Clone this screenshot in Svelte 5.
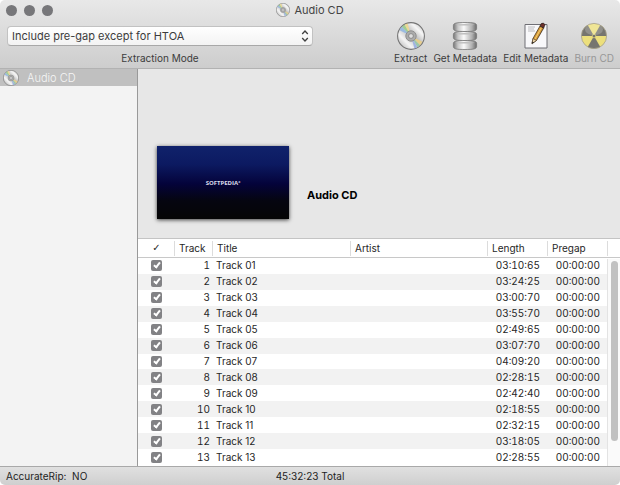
<script lang="ts">
  interface Track {
    number: number;
    length: string;
    pregap: string;
    selected: boolean;
  }

  const lengths = [
    '03:10:65', '03:24:25', '03:00:70', '03:55:70', '02:49:65', '03:07:70', '04:09:20',
    '02:28:15', '02:42:40', '02:18:55', '02:32:15', '03:18:05', '02:28:55'
  ];

  let tracks = $state<Track[]>(
    lengths.map((length, i) => ({ number: i + 1, length, pregap: '00:00:00', selected: true }))
  );

  let mode = $state('except-htoa');

  const trackTitle = (n: number) => `Track ${String(n).padStart(2, '0')}`;
</script>

{#snippet disc(id: string)}
  <svg class="disc" viewBox="0 0 28 28" aria-hidden="true">
    <defs>
      <linearGradient id="{id}-base" x1="0" y1="1" x2="1" y2="0">
        <stop offset="0" stop-color="#a0a0a0" />
        <stop offset="0.3" stop-color="#f4f4f4" />
        <stop offset="0.55" stop-color="#bcbcbc" />
        <stop offset="0.75" stop-color="#f6f6f6" />
        <stop offset="1" stop-color="#acacac" />
      </linearGradient>
    </defs>
    <circle cx="14" cy="14" r="13.4" fill="url(#{id}-base)" stroke="#747474" stroke-width="1.1" />
    <path d="M14 14 2.6 8.2A13 13 0 0 1 5 4.8Z" fill="#9bbbe0" />
    <path d="M14 14 5 4.8A13 13 0 0 1 7.6 2.8Z" fill="#9fcf94" />
    <path d="M14 14 7.6 2.8A13 13 0 0 1 10.6 1.6Z" fill="#ecd894" />
    <path d="M14 14 25.4 19.8A13 13 0 0 1 23 23.2Z" fill="#e6cd8c" />
    <path d="M14 14 23 23.2A13 13 0 0 1 20.4 25.2Z" fill="#9cc7aa" />
    <path d="M14 14 20.4 25.2A13 13 0 0 1 17.4 26.4Z" fill="#a0b3e0" />
    <circle cx="14" cy="14" r="5.2" fill="#acacac" stroke="#8a8a8a" stroke-width="0.9" />
    <circle cx="14" cy="14" r="2.4" fill="#dedede" stroke="#858585" stroke-width="0.9" />
  </svg>
{/snippet}

<div class="window">
  <header class="chrome">
    <div class="titlebar">
      <div class="lights" aria-hidden="true"><i></i><i></i><i></i></div>
      <h1 class="title">{@render disc('title')}Audio CD</h1>
    </div>

    <div class="toolbar">
      <div class="mode">
        <div class="popup">
          <select id="mode" bind:value={mode}>
            <option value="except-htoa">Include pre-gap except for HTOA</option>
            <option value="include">Include pre-gap</option>
            <option value="exclude">Exclude pre-gap</option>
          </select>
          <svg class="popup-arrows" viewBox="0 0 8 14" aria-hidden="true">
            <path d="M1.2 5 4 2 6.8 5M1.2 9 4 12 6.8 9" />
          </svg>
        </div>
        <label for="mode">Extraction Mode</label>
      </div>

      <nav class="actions">
        <button type="button" class="action">
          {@render disc('extract')}
          Extract
        </button>
        <button type="button" class="action">
          <svg viewBox="0 0 28 28" aria-hidden="true">
            <defs>
              <linearGradient id="drum">
                <stop offset="0" stop-color="#777" />
                <stop offset="0.2" stop-color="#c8c8c8" />
                <stop offset="0.45" stop-color="#fafafa" />
                <stop offset="0.8" stop-color="#b0b0b0" />
                <stop offset="1" stop-color="#6a6a6a" />
              </linearGradient>
            </defs>
            {#each [18.5, 9.5, 0.5] as y}
              <path
                d="M2.4 {y + 3}C2.4 {y + 0.4} 6 {y} 14 {y}S25.6 {y + 0.4} 25.6 {y + 3}V{y + 6}C25.6 {y + 8.6} 22 {y + 9} 14 {y + 9}S2.4 {y + 8.6} 2.4 {y + 6}Z"
                fill="url(#drum)"
                stroke="#777"
                stroke-width="0.8"
              />
              <path d="M4 {y + 2.2}Q14 {y + 4} 24 {y + 2.2}Q14 {y + 0.6} 4 {y + 2.2}Z" fill="#bdbdbd" />
            {/each}
          </svg>
          Get Metadata
        </button>
        <button type="button" class="action">
          <svg viewBox="0 0 28 28" aria-hidden="true">
            <path d="M3 2.5H25V26H3Z" fill="#f8f8fa" stroke="#6f6f74" />
            <path d="M6 5H13M6 7H12M6 9H13" stroke="#b5b5b9" stroke-width="0.9" />
            <path d="M10 22 17 13 22 5" fill="none" stroke="#bbb" stroke-width="2" />
            <path d="M10 21.5 11 16.5 18 4 21.5 6 14.5 18.5Z" fill="#d89b36" stroke="#49351f" stroke-width="0.8" />
            <path d="M13 17 19.5 5.5" stroke="#f5ce75" stroke-width="1" />
            <path d="M10 21.5 11 16.5 14.5 18.5Z" fill="#ead6ac" stroke="#49351f" stroke-width="0.6" />
            <path d="M10 21.5 10.4 19.5 12 20.4Z" fill="#222" />
            <path d="M18 4 19.3 1.6Q21.8 0.2 23 2.8L21.5 6Z" fill="#6d302b" stroke="#2d2220" stroke-width="0.8" />
          </svg>
          Edit Metadata
        </button>
        <button type="button" class="action" disabled>
          <svg viewBox="0 0 28 28" aria-hidden="true">
            <circle cx="14" cy="14" r="12.6" fill="#ecdf7c" />
            <g fill="#76756f">
              <path d="M14 14H1.4A12.6 12.6 0 0 1 7.7 3.1Z" />
              <path d="M14 14 20.3 3.1A12.6 12.6 0 0 1 26.6 14Z" />
              <path d="M14 14 20.3 24.9A12.6 12.6 0 0 1 7.7 24.9Z" />
            </g>
            <circle cx="14" cy="14" r="1.8" fill="#76756f" stroke="#ecdf7c" stroke-width="0.6" />
            <ellipse cx="14" cy="7.5" rx="9" ry="5.5" fill="#fff" opacity="0.2" />
            <circle cx="14" cy="14" r="12.6" fill="none" stroke="#a4a090" stroke-width="0.8" />
          </svg>
          Burn CD
        </button>
      </nav>
    </div>
  </header>

  <div class="body">
    <aside class="sidebar">
      <a class="source" href="#audio-cd">{@render disc('source')}Audio CD</a>
    </aside>

    <main class="content" id="audio-cd">
      <section class="album">
        <div class="artwork">SOFTPEDIA<sup>°</sup></div>
        <h2>Audio CD</h2>
      </section>

      <div class="tracks">
        <table>
          <colgroup>
            <col class="col-check" />
            <col class="col-number" />
            <col class="col-title" />
            <col />
            <col class="col-time" />
            <col class="col-time" />
            <col class="col-scroll" />
          </colgroup>
          <thead>
            <tr>
              <th class="check">✓</th>
              <th>Track</th>
              <th>Title</th>
              <th>Artist</th>
              <th>Length</th>
              <th>Pregap</th>
              <th></th>
            </tr>
          </thead>
          <tbody>
            {#each tracks as track (track.number)}
              <tr>
                <td class="check">
                  <input type="checkbox" bind:checked={track.selected} aria-label={trackTitle(track.number)} />
                </td>
                <td class="number">{track.number}</td>
                <td>{trackTitle(track.number)}</td>
                <td></td>
                <td class="time">{track.length}</td>
                <td class="time">{track.pregap}</td>
                <td></td>
              </tr>
            {/each}
          </tbody>
        </table>
        <div class="scrollbar" aria-hidden="true"><div class="thumb"></div></div>
      </div>
    </main>
  </div>

  <footer class="status">
    <span>AccurateRip: &nbsp;NO</span>
    <span>45:32:23 Total</span>
  </footer>
</div>

<style>
  :global(body) {
    background: #fff;
  }

  .window {
    display: flex;
    flex-direction: column;
    height: 100vh;
    border-radius: 5px;
    overflow: hidden;
    font-family: Inter, 'Liberation Sans', sans-serif;
    font-size: 10px;
    line-height: 14px;
    color: #262626;
  }

  h1,
  h2 {
    margin: 0;
    font-size: 11px;
  }

  .chrome {
    background: linear-gradient(#e8e8e8, #cdcdcd);
    border-bottom: 1px solid #b2b2b2;
  }

  .titlebar {
    display: grid;
    grid-template-columns: 1fr auto 1fr;
    align-items: center;
    height: 20px;
    padding: 0 6px;
  }

  .lights {
    display: flex;
    gap: 7px;
  }

  .lights i {
    width: 11px;
    height: 11px;
    border-radius: 50%;
    background: #77777a;
  }

  .title {
    display: flex;
    align-items: center;
    gap: 4px;
    font-weight: 400;
    color: #444;
  }

  .title .disc {
    width: 14px;
    height: 14px;
  }

  .toolbar {
    display: flex;
    justify-content: space-between;
    padding: 2px 6px 3px 7px;
  }

  .mode {
    display: flex;
    flex: 1;
    flex-direction: column;
    align-items: center;
    gap: 5px;
    max-width: 306px;
    padding-top: 4px;
    color: #3c3c3c;
  }

  .popup {
    position: relative;
    width: 100%;
  }

  select {
    display: block;
    appearance: none;
    width: 100%;
    height: 20px;
    padding: 0 20px 0 4px;
    border: 1px solid #c2c2c2;
    border-bottom-color: #a8a8a8;
    border-radius: 4px;
    background: linear-gradient(#fff, #f3f3f3);
    font: inherit;
    font-size: 11px;
    color: #3c3c3c;
  }

  .popup-arrows {
    position: absolute;
    top: 3px;
    right: 4px;
    width: 8px;
    height: 14px;
    fill: none;
    stroke: #404040;
    stroke-width: 1.3;
    pointer-events: none;
  }

  .actions {
    display: flex;
    gap: 6px;
  }

  .action {
    display: flex;
    flex-direction: column;
    align-items: center;
    gap: 1px;
    padding: 0;
    border: 0;
    background: none;
    font: inherit;
    color: #3c3c3c;
  }

  .action svg {
    width: 28px;
    height: 28px;
  }

  .action:disabled {
    color: #979797;
  }

  .body {
    display: flex;
    flex: 1;
    min-height: 0;
  }

  .sidebar {
    width: 137px;
    border-right: 1px solid #999;
    background: #f3f3f3;
  }

  .source {
    display: flex;
    align-items: center;
    gap: 8px;
    height: 17px;
    padding-left: 3px;
    background: #c0c0c0;
    font-size: 11px;
    font-weight: 300;
    color: #f6f6f6;
    text-decoration: none;
  }

  .source .disc {
    width: 16px;
    height: 16px;
  }

  .content {
    display: flex;
    flex: 1;
    flex-direction: column;
    min-width: 0;
  }

  .album {
    display: flex;
    flex: 1;
    align-items: flex-end;
    gap: 18px;
    padding: 0 19px;
    border-bottom: 1px solid #c4c4c4;
    background: #e7e7e7;
  }

  .artwork {
    display: flex;
    align-items: center;
    justify-content: center;
    width: 132px;
    height: 73px;
    margin-bottom: 19px;
    background: linear-gradient(#10226b, #0c1a61 25%, #04033a 52%, #050510 75%, #050505);
    box-shadow: 0 1px 4px #000b;
    font-family: 'Open Sans', sans-serif;
    font-size: 6px;
    font-weight: 700;
    color: #dcdcec;
  }

  .artwork sup {
    line-height: 6px;
  }

  .album h2 {
    margin-bottom: 36px;
    font-weight: 700;
    color: #000;
  }

  .tracks {
    position: relative;
    padding-bottom: 1px;
    background: #fff;
  }

  table {
    width: 100%;
    height: 226px;
    border-collapse: separate;
    border-spacing: 0;
    table-layout: fixed;
  }

  .col-check {
    width: 37px;
  }

  .col-number {
    width: 38px;
  }

  .col-title {
    width: 138px;
  }

  .col-time {
    width: 60px;
  }

  .col-scroll {
    width: 12px;
  }

  th {
    height: 18px;
    padding: 0 4px;
    border-bottom: 1px solid #c8c8c8;
    background: linear-gradient(#dcdcdc, #dcdcdc) right center / 1px 15px no-repeat;
    font-weight: 400;
    text-align: left;
  }

  th:last-child {
    background: none;
  }

  td {
    padding: 0 3px;
    line-height: 15px;
  }

  tbody tr:nth-child(even) td:not(:last-child) {
    background: #f2f2f2;
  }

  th.check,
  td.check {
    padding: 0;
    text-align: center;
  }

  th.check {
    font-family: 'DejaVu Sans', sans-serif;
    font-weight: 700;
  }

  .number,
  .time {
    text-align: right;
    font-variant-numeric: tabular-nums;
  }

  .time {
    padding-right: 8px;
  }

  input[type='checkbox'] {
    display: grid;
    place-items: center;
    appearance: none;
    width: 11px;
    height: 11px;
    margin: 0 auto;
    border-radius: 2px;
    background: #828285;
  }

  input[type='checkbox']:checked::after {
    content: '';
    width: 2px;
    height: 5px;
    margin-bottom: 2px;
    border: solid #fff;
    border-width: 0 2px 2px 0;
    transform: rotate(38deg);
  }

  .scrollbar {
    position: absolute;
    top: 20px;
    right: 0;
    bottom: 0;
    width: 12px;
    border-left: 1px solid #e3e3e3;
    background: #fafafa;
  }

  .thumb {
    width: 7px;
    height: 87%;
    margin: 2px auto;
    border-radius: 4px;
    background: #c1c1c1;
  }

  .status {
    display: grid;
    grid-template-columns: 1fr auto 1fr;
    align-items: center;
    height: 18px;
    padding: 0 6px;
    border-top: 1px solid #a9a9a9;
    background: linear-gradient(#e0e0e0, #cfcfcf);
    color: #1e1e1e;
  }
</style>
